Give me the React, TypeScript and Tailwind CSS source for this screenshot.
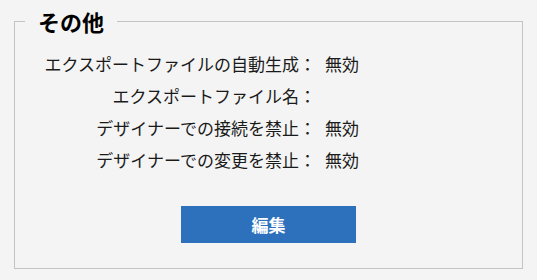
const rows = [
  { label: "エクスポートファイルの自動生成：", value: "無効" },
  { label: "エクスポートファイル名：", value: "" },
  { label: "デザイナーでの接続を禁止：", value: "無効" },
  { label: "デザイナーでの変更を禁止：", value: "無効" },
];

export default function App() {
  return (
    <div className="w-[537px] h-[280px] bg-[#f4f4f4] pt-[7px] px-[14px] font-['Noto_Sans_CJK_JP','Noto_Sans',sans-serif] text-[#1a1a1a]">
      <fieldset className="border border-[#c4c4c4] h-[262px]">
        <legend className="ml-[10px] px-[13px] text-[22px] leading-[28px] font-bold text-black">
          その他
        </legend>
        <div className="pt-[13px] grid grid-cols-[301px_auto] gap-x-[9px] text-[17px] leading-[32px]">
          {rows.map((row) => (
            <div key={row.label} className="contents">
              <div className="text-right">{row.label}</div>
              <div>{row.value}</div>
            </div>
          ))}
        </div>
        <div className="flex justify-center mt-[30px]">
          <button className="w-[175px] h-[37px] bg-[#2d71bd] text-white text-[17px] font-bold">
            編集
          </button>
        </div>
      </fieldset>
    </div>
  );
}
